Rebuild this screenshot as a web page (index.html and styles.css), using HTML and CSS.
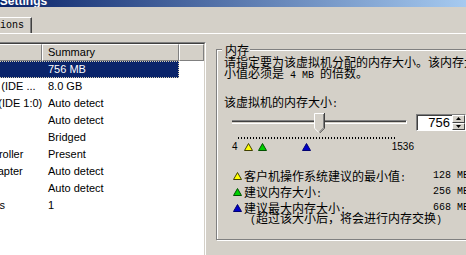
FILE: index.html
```html
<!DOCTYPE html>
<html>
<head>
    <meta charset="UTF-8">
    <title>Virtual Machine Settings</title>
    <link rel="stylesheet" href="styles.css">
</head>
<body>
<div class="window">
    <div class="titlebar"><span>Virtual Machine Settings</span></div>

    <div class="tabs">
        <div class="tab">Options</div>
    </div>

    <div class="panel">
        <div class="device-list">
            <div class="list-inner">
                <div class="list-head">
                    <div class="cell">Device</div>
                    <div class="cell">Summary</div>
                    <div class="cell"></div>
                </div>
                <div class="list-row selected"><div class="cell">Memory</div><div class="cell">756 MB</div></div>
                <div class="list-row"><div class="cell">Hard Disk (IDE ...</div><div class="cell">8.0 GB</div></div>
                <div class="list-row"><div class="cell">CD-ROM (IDE 1:0)</div><div class="cell">Auto detect</div></div>
                <div class="list-row"><div class="cell">Floppy</div><div class="cell">Auto detect</div></div>
                <div class="list-row"><div class="cell">Ethernet</div><div class="cell">Bridged</div></div>
                <div class="list-row"><div class="cell">USB Controller</div><div class="cell">Present</div></div>
                <div class="list-row"><div class="cell">Sound Adapter</div><div class="cell">Auto detect</div></div>
                <div class="list-row"><div class="cell">Display</div><div class="cell">Auto detect</div></div>
                <div class="list-row"><div class="cell">Processors</div><div class="cell">1</div></div>
            </div>
        </div>

        <div class="group">
            <div class="group-title">内存</div>
            <div class="desc">
                请指定要为该虚拟机分配的内存大小。该内存大<br>
                小值必须是<span class="half"> 4 MB </span>的倍数。
            </div>
            <div class="mem-label">该虚拟机的内存大小<span class="half">:</span></div>

            <div class="slider-row">
                <div class="slider">
                    <div class="track"></div>
                    <svg class="thumb" style="left: 90px" width="11" height="20" viewBox="0 0 11 20">
                        <path d="M0 0H11V15L5.5 20.5L0 15Z" fill="#d4d0c8"/>
                        <path d="M.5 15V.5H10" stroke="#fff" fill="none"/>
                        <path d="M10.5 0V15.2L5.5 20.2" stroke="#404040" fill="none"/>
                        <path d="M9.5 1V14.8L5.5 18.8" stroke="#808080" fill="none"/>
                        <path d="M.5 15.2L4.8 19.5" stroke="#fff" fill="none"/>
                    </svg>
                </div>
                <div class="spin">
                    <div class="spin-field">756</div>
                    <div class="spin-buttons">
                        <div class="spin-btn"><svg width="5" height="3" viewBox="0 0 5 3"><path d="M2.5 0L5 3H0Z"/></svg></div>
                        <div class="spin-btn"><svg width="5" height="3" viewBox="0 0 5 3"><path d="M0 0H5L2.5 3Z"/></svg></div>
                    </div>
                </div>
            </div>
            <div class="ticks"></div>
            <div class="scale-labels">
                <span>4</span>
                <span>1536</span>
                <svg class="marker" style="left: 20px" width="9" height="8" viewBox="0 0 9 8"><path d="M4.5 .5L8.5 7.5H.5Z" fill="#ffff00" stroke="#404000"/></svg>
                <svg class="marker" style="left: 34px" width="9" height="8" viewBox="0 0 9 8"><path d="M4.5 .5L8.5 7.5H.5Z" fill="#00d000" stroke="#005000"/></svg>
                <svg class="marker" style="left: 78px" width="9" height="8" viewBox="0 0 9 8"><path d="M4.5 .5L8.5 7.5H.5Z" fill="#0000c8" stroke="#000070"/></svg>
            </div>

            <div class="legend">
                <svg class="icon" width="9" height="8" viewBox="0 0 9 8"><path d="M4.5 .5L8.5 7.5H.5Z" fill="#ffff00" stroke="#404000"/></svg>
                <span>客户机操作系统建议的最小值<span class="half">:</span></span>
                <span class="value">128 MB</span>

                <svg class="icon" width="9" height="8" viewBox="0 0 9 8"><path d="M4.5 .5L8.5 7.5H.5Z" fill="#00d000" stroke="#005000"/></svg>
                <span>建议内存大小<span class="half">:</span></span>
                <span class="value">256 MB</span>

                <svg class="icon" width="9" height="8" viewBox="0 0 9 8"><path d="M4.5 .5L8.5 7.5H.5Z" fill="#0000c8" stroke="#000070"/></svg>
                <span>建议最大内存大小<span class="half">:</span></span>
                <span class="value">668 MB</span>

                <span class="note"><span class="half"> (</span>超过该大小后，将会进行内存交换<span class="half">)</span></span>
            </div>
        </div>
    </div>
</div>
</body>
</html>
```

FILE: styles.css
```css
* {
    box-sizing: border-box;
}

body {
    margin: 0;
    background-color: #d4d0c8;
    font-family: "Liberation Sans", Arial, sans-serif;
    font-size: 11px;
    color: #000;
}

.window {
    width: 466px;
    height: 255px;
    overflow: hidden;
}

.titlebar {
    height: 7px;
    overflow: hidden;
    display: flex;
    align-items: flex-end;
    padding-bottom: 1px;
    background: linear-gradient(to right, #0a246a, #a6caf0);
    color: #fff;
    font-weight: bold;
    font-size: 12px;
    white-space: nowrap;
}

.titlebar span {
    line-height: 10px;
    margin-left: -92px;
}

.tabs {
    height: 26px;
    padding-top: 10px;
}

.tab {
    width: fit-content;
    height: 16px;
    margin-left: -25px;
    padding: 0 7px 0 6px;
    border-top: 1px solid #fff;
    border-left: 1px solid #fff;
    border-right: 1px solid #404040;
    box-shadow: inset -1px 0 #808080;
    font-family: "Liberation Mono", monospace;
    font-size: 10px;
    line-height: 15px;
}

.panel {
    border-top: 1px solid #fff;
    padding-top: 8px;
    display: flex;
    align-items: flex-start;
}

/* device list */
.device-list {
    flex: none;
    width: 262px;
    height: 230px;
    margin-left: -56px;
    border: 1px solid;
    border-color: #808080 #fff #fff #808080;
}

.list-inner {
    height: 100%;
    border: 1px solid;
    border-color: #404040 #d4d0c8 #d4d0c8 #404040;
    background-color: #fff;
}

.list-head,
.list-row {
    display: grid;
    grid-template-columns: 96px 137px;
}

.list-head {
    grid-template-columns: 96px 137px 1fr;
    height: 17px;
}

.list-head .cell {
    background-color: #d4d0c8;
    border-top: 1px solid #fff;
    border-left: 1px solid #fff;
    border-right: 1px solid #808080;
    border-bottom: 1px solid #808080;
    padding-left: 5px;
    line-height: 15px;
    white-space: nowrap;
    overflow: hidden;
}

.list-row {
    height: 17px;
    line-height: 17px;
}

.list-row .cell {
    padding-left: 6px;
    white-space: nowrap;
    overflow: hidden;
}

.list-row .cell:first-child {
    padding-left: 4px;
}

.list-row.selected {
    width: 233px;
    background-color: #0a246a;
    color: #fff;
    outline: 1px dotted #d8d0b0;
    outline-offset: -1px;
}

/* memory group box */
.group {
    flex: none;
    width: 262px;
    height: 191px;
    margin: 7px 0 0 10px;
    padding-left: 7px;
    border: 1px solid #808080;
    box-shadow: inset 1px 1px #fff, 1px 1px #fff;
    font-family: "Noto Sans CJK SC", "Liberation Sans", sans-serif;
    font-size: 12px;
    white-space: nowrap;
}

.group-title {
    width: fit-content;
    margin: -7px 0 0 -2px;
    padding: 0 1px 0 3px;
    background-color: #d4d0c8;
    line-height: 13px;
}

.half {
    font-family: "Liberation Mono", monospace;
    font-size: 10px;
    line-height: 1px;
    white-space: pre;
}

.desc {
    line-height: 11px;
}

.mem-label {
    margin-top: 17px;
    line-height: 13px;
}

.slider-row {
    display: flex;
    align-items: flex-start;
    margin-top: 4px;
    height: 21px;
}

.slider {
    position: relative;
    width: 187px;
    height: 21px;
}

.track {
    width: 175px;
    height: 4px;
    margin: 8px 0 0 8px;
    border: 1px solid;
    border-color: #808080 #fff #fff #808080;
    border-left: 0;
    background-color: #d4d0c8;
    box-shadow: inset 0 1px #404040;
}

.thumb {
    position: absolute;
    top: 1px;
}

.spin {
    display: flex;
    width: 50px;
    height: 17px;
    margin: 2px 0 0 5px;
    border: 1px solid;
    border-color: #808080 #fff #fff #808080;
}

.spin-field {
    flex: 1;
    border-top: 1px solid #404040;
    border-left: 1px solid #404040;
    background-color: #fff;
    font-family: "Liberation Sans", Arial, sans-serif;
    font-size: 13px;
    line-height: 14px;
    text-align: right;
    padding-right: 2px;
}

.spin-buttons {
    width: 13px;
    display: flex;
    flex-direction: column;
}

.spin-btn {
    flex: 1;
    display: flex;
    align-items: center;
    justify-content: center;
    background-color: #d4d0c8;
    border: 1px solid;
    border-color: #fff #404040 #404040 #fff;
}

.spin-btn svg {
    display: block;
}

.ticks {
    width: 157px;
    height: 2px;
    margin: 4px 0 0 14px;
    background: repeating-linear-gradient(to right, #000 0 1px, transparent 1px 3px);
}

.scale-labels {
    position: relative;
    display: flex;
    justify-content: space-between;
    width: 190px;
    margin-top: 2px;
    padding-left: 8px;
    font-family: "Liberation Sans", Arial, sans-serif;
    font-size: 10px;
    line-height: 12px;
}

.marker {
    position: absolute;
    top: 2px;
}

.legend {
    display: grid;
    grid-template-columns: 11px 189px auto;
    align-items: center;
    margin: 15px 0 0 9px;
    line-height: 16px;
}

.legend .icon {
    display: block;
}

.legend .value {
    font-family: "Liberation Mono", monospace;
    font-size: 10px;
    line-height: 16px;
}

.legend .note {
    grid-column: 2 / 4;
    margin-top: -4px;
    line-height: 12px;
}
```
